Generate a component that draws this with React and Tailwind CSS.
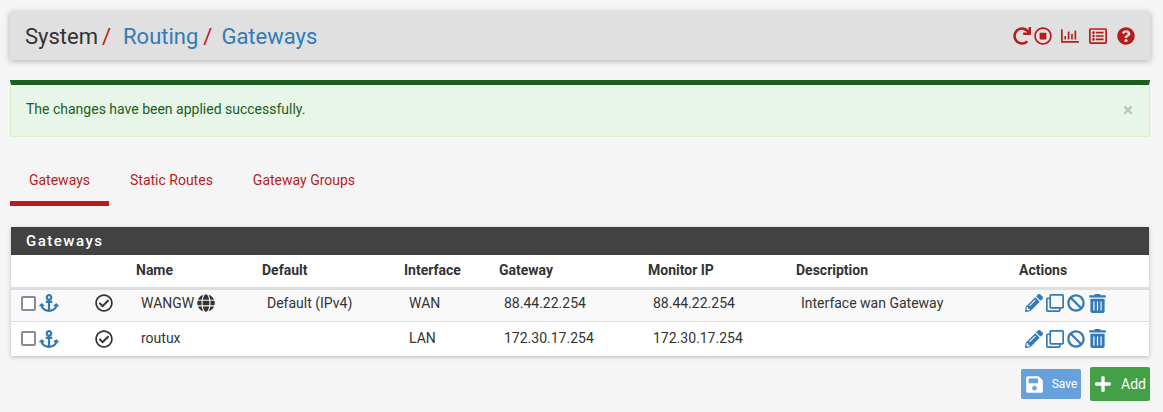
import React from "react";
import {
  FaRedo,
  FaRegStopCircle,
  FaRegChartBar,
  FaRegListAlt,
  FaQuestionCircle,
  FaAnchor,
  FaRegCheckCircle,
  FaGlobe,
  FaPencilAlt,
  FaRegClone,
  FaBan,
  FaTrashAlt,
  FaSave,
  FaPlus,
  FaTimes,
} from "react-icons/fa";

const rows = [
  { name: "WANGW", globe: true, def: "Default (IPv4)", iface: "WAN", gw: "88.44.22.254", mon: "88.44.22.254", desc: "Interface wan Gateway", stripe: true },
  { name: "routux", globe: false, def: "", iface: "LAN", gw: "172.30.17.254", mon: "172.30.17.254", desc: "", stripe: false },
];

function Row({ r }) {
  // first row sits a little high in its cell, as in the reference
  const pad = r.stripe ? "pl-[10px] pb-[4px]" : "pl-[10px]";
  return (
    <tr className={r.stripe ? "h-[33px] bg-[#f9f9f9] border-b border-[#ddd]" : "h-[35px] bg-white"}>
      <td className={pad}>
        <div className="flex items-center gap-[3px]">
          <span className="w-[15px] h-[15px] border-2 border-[#8a8a9a] rounded-[2px] bg-white" />
          <FaAnchor className="text-[#337ab7] text-[20px]" />
        </div>
      </td>
      <td className={r.stripe ? "pl-[9px] pb-[4px]" : "pl-[9px]"}>
        <FaRegCheckCircle className="text-[#333] text-[18px]" />
      </td>
      <td className={pad}>
        <span className="inline-flex items-center gap-[3px]">
          {r.name}
          {r.globe && <FaGlobe className="text-[#333] text-[18px]" />}
        </span>
      </td>
      <td className={pad}>{r.def}</td>
      <td className={pad}>{r.iface}</td>
      <td className={pad}>{r.gw}</td>
      <td className={pad}>{r.mon}</td>
      <td className={pad}>{r.desc}</td>
      <td className={pad}>
        <div className="flex items-center text-[#337ab7] text-[18px] pl-[1px]">
          <FaPencilAlt />
          <FaRegClone className="ml-[3px]" />
          <FaBan className="ml-[3px]" />
          <FaTrashAlt className="ml-[3px] text-[19px]" />
        </div>
      </td>
    </tr>
  );
}

export default function App() {
  return (
    <div className="min-h-screen bg-[#f5f5f5] pl-[10px] pr-[13px] pt-[12px] font-['Roboto',sans-serif] text-[14px] text-[#333]">
      <div className="h-[48px] bg-[#e0e0e0] shadow-[0_1px_6px_rgba(0,0,0,0.3)] flex items-center justify-between pl-[15px] pr-[15px]">
        <div className="text-[22px] flex items-center">
          <span className="text-[#333]">System</span>
          <span className="text-[#b71c1c] ml-[4px]">/</span>
          <span className="text-[#337ab7] ml-[12px]">Routing</span>
          <span className="text-[#b71c1c] ml-[5px]">/</span>
          <span className="text-[#337ab7] ml-[9px]">Gateways</span>
        </div>
        <div className="flex items-center text-[#b71c1c] text-[18px]">
          <FaRedo />
          <FaRegStopCircle className="ml-[3px]" />
          <FaRegChartBar className="ml-[9px]" />
          <FaRegListAlt className="ml-[10px]" />
          <FaQuestionCircle className="ml-[10px]" />
        </div>
      </div>

      <div className="mt-[20px] h-[57px] bg-[#e8f5e9] border-t-[5px] border-t-[#1b5e20] border-x border-b border-x-[#dcedc8] border-b-[#dcedc8] flex items-center justify-between pl-[15px] pr-[15px] pb-[2px] text-[#1b5e20]">
        <span>The changes have been applied successfully.</span>
        <FaTimes className="text-[#b8c4b9] text-[12px]" />
      </div>

      <div className="mt-[18px] flex h-[51px]">
        <div className="w-[99px] border-b-[5px] border-[#b71c1c] text-[#b71c1c] flex justify-center pt-[15px]">Gateways</div>
        <div className="pl-[21px] pr-[19px] text-[#b71c1c] pt-[15px]">Static Routes</div>
        <div className="px-[21px] text-[#b71c1c] pt-[15px]">Gateway Groups</div>
      </div>

      <div className="mt-[21px] mx-px bg-white shadow-[0_1px_4px_rgba(0,0,0,0.25)]">
        <div className="h-[28px] bg-[#424242] text-white font-medium text-[15px] tracking-[1.5px] flex items-center pl-[15px]">Gateways</div>
        <table className="w-full table-fixed border-collapse">
          <colgroup>
            <col className="w-[75px]" />
            <col className="w-[45px]" />
            <col className="w-[126px]" />
            <col className="w-[142px]" />
            <col className="w-[95px]" />
            <col className="w-[149px]" />
            <col className="w-[148px]" />
            <col className="w-[223px]" />
            <col />
          </colgroup>
          <thead>
            <tr className="h-[33px] border-b-[3px] border-[#ddd] text-left">
              <th />
              <th />
              <th className="pl-[5px] font-bold">Name</th>
              <th className="pl-[5px] font-bold">Default</th>
              <th className="pl-[5px] font-bold">Interface</th>
              <th className="pl-[5px] font-bold">Gateway</th>
              <th className="pl-[5px] font-bold">Monitor IP</th>
              <th className="pl-[5px] font-bold">Description</th>
              <th className="pl-[5px] font-bold">Actions</th>
            </tr>
          </thead>
          <tbody>
            {rows.map((r) => (
              <Row key={r.name} r={r} />
            ))}
          </tbody>
        </table>
      </div>

      <div className="mt-[11px] flex justify-end gap-[9px] items-center">
        <button className="w-[60px] h-[30px] bg-[#66a1dd] rounded-[2px] text-white text-[12px] flex items-center justify-center gap-[8px]">
          <FaSave className="text-[19px]" />
          Save
        </button>
        <button className="w-[60px] h-[34px] bg-[#43a047] rounded-[2px] text-white text-[14px] flex items-center justify-center gap-[9px]">
          <FaPlus className="text-[18px]" />
          Add
        </button>
      </div>
    </div>
  );
}
